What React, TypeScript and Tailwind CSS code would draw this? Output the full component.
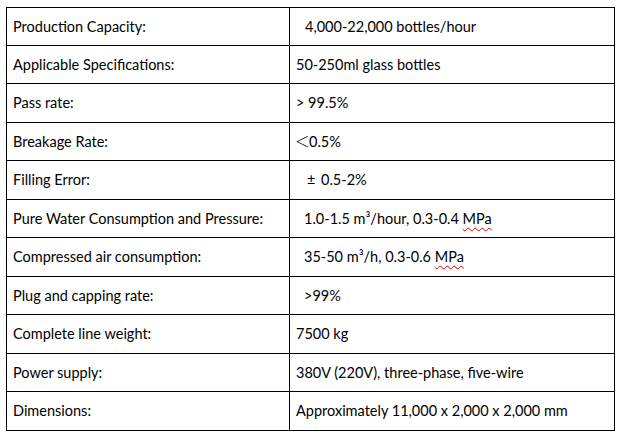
const rows: { label: string; value: React.ReactNode; h: string; indent: string }[] = [
  { label: "Production Capacity:", value: "4,000-22,000 bottles/hour", h: "h-[38px]", indent: "pl-[15px]" },
  { label: "Applicable Specifications:", value: "50-250ml glass bottles", h: "h-[38px]", indent: "pl-[6px]" },
  { label: "Pass rate:", value: "> 99.5%", h: "h-[39px]", indent: "pl-[6px]" },
  {
    label: "Breakage Rate:",
    value: (
      <>
        <span className="inline-block w-[14px] font-light">＜</span>0.5%
      </>
    ),
    h: "h-[38px]",
    indent: "pl-[5px]",
  },
  {
    label: "Filling Error:",
    value: (
      <>
        <span className="inline-block w-[14px]">±</span>0.5-2%
      </>
    ),
    h: "h-[39px]",
    indent: "pl-[17px]",
  },
  {
    label: "Pure Water Consumption and Pressure:",
    value: (
      <>
        1.0-1.5 m³/hour, 0.3-0.4{" "}
        <span className="underline decoration-wavy decoration-[#e00000] decoration-1 underline-offset-[3px]">MPa</span>
      </>
    ),
    h: "h-[38px]",
    indent: "pl-[14px]",
  },
  {
    label: "Compressed air consumption:",
    value: (
      <>
        35-50 m³/h, 0.3-0.6{" "}
        <span className="underline decoration-wavy decoration-[#e00000] decoration-1 underline-offset-[3px]">MPa</span>
      </>
    ),
    h: "h-[39px]",
    indent: "pl-[14px]",
  },
  { label: "Plug and capping rate:", value: ">99%", h: "h-[38px]", indent: "pl-[14px]" },
  { label: "Complete line weight:", value: "7500 kg", h: "h-[39px]", indent: "pl-[6px]" },
  { label: "Power supply:", value: "380V (220V), three-phase, five-wire", h: "h-[38px]", indent: "pl-[6px]" },
  { label: "Dimensions:", value: "Approximately 11,000 x 2,000 x 2,000 mm", h: "h-[39px]", indent: "pl-[6px]" },
];

export default function App() {
  return (
    <div className="w-[622px] h-[436px] bg-white pt-[7px] pl-[6px] font-['Lato','Noto_Sans_CJK_SC',sans-serif] text-[14.5px] text-black">
      <div className="w-[609px] border-t border-l border-r border-black">
        {rows.map((r) => (
          <div key={r.label} className={`flex border-b border-black ${r.h}`}>
            <div className="w-[283px] border-r border-black flex items-center pl-[6px]">
              <span>{r.label}</span>
            </div>
            <div className={`flex-1 flex items-center ${r.indent}`}>
              <span>{r.value}</span>
            </div>
          </div>
        ))}
      </div>
    </div>
  );
}
